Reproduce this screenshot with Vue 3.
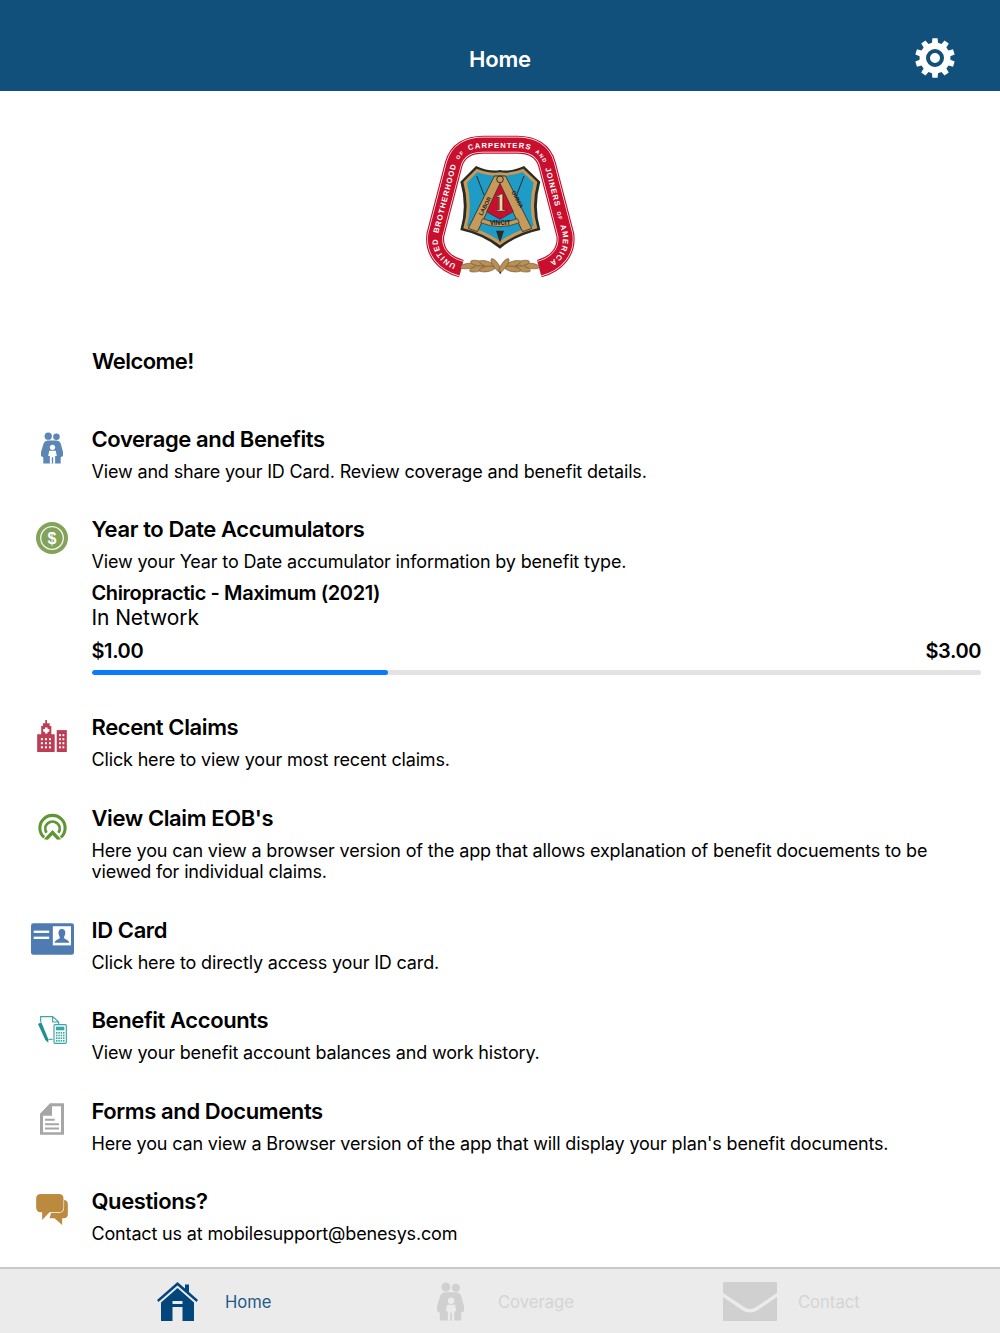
<script setup>
const rows = [
  { icon: 'family', title: 'Coverage and Benefits', text: 'View and share your ID Card. Review coverage and benefit details.' },
  { icon: 'dollar', title: 'Year to Date Accumulators', text: 'View your Year to Date accumulator information by benefit type.', accum: true },
  { icon: 'hospital', title: 'Recent Claims', text: 'Click here to view your most recent claims.' },
  { icon: 'eob', title: "View Claim EOB's", text: 'Here you can view a browser version of the app that allows explanation of benefit docuements to be viewed for individual claims.' },
  { icon: 'card', title: 'ID Card', text: 'Click here to directly access your ID card.' },
  { icon: 'accounts', title: 'Benefit Accounts', text: 'View your benefit account balances and work history.' },
  { icon: 'forms', title: 'Forms and Documents', text: "Here you can view a Browser version of the app that will display your plan's benefit documents." },
  { icon: 'chat', title: 'Questions?', text: 'Contact us at mobilesupport@benesys.com' }
]

function gearPath() {
  const n = 10, R = 20, r = 15.5
  let d = ''
  for (let i = 0; i < n; i++) {
    const a = (i / n) * Math.PI * 2 - Math.PI / 2
    const w = (Math.PI / n)
    const pts = [
      [r, a - w * 0.62], [R, a - w * 0.42], [R, a + w * 0.42], [r, a + w * 0.62]
    ]
    pts.forEach(([rad, ang], j) => {
      const x = (22 + rad * Math.cos(ang)).toFixed(2)
      const y = (22 + rad * Math.sin(ang)).toFixed(2)
      d += (i === 0 && j === 0 ? 'M' : 'L') + x + ' ' + y + ' '
    })
  }
  return d + 'Z'
}
const gear = gearPath()

const leaves = [
  [205, 438, -8], [235, 430, 12], [232, 447, -12], [262, 432, 18], [262, 447, -10], [288, 436, 55],
  [395, 438, 8], [365, 430, -12], [368, 447, 12], [338, 432, -18], [338, 447, 10], [312, 436, -55]
]
const ringMid = 'M184 446 C132 432 100 395 106 345 L161 133 C172 92 205 74 250 74 L352 74 C397 74 430 92 441 133 L496 345 C502 395 470 432 418 446'
const adultPath = 'M0 60 L8 34 Q10 27 20 25 L48 25 Q58 27 60 34 L67 60 L67 72 L60 76 L60 95 L7 95 L7 76 L0 72 Z'
const childPath = 'M25 56 H45 L48 72 H43 V96 H37 V76 H33 V96 H27 V72 H22 Z'
</script>

<template>
  <div class="page">
    <header class="top">
      <h1 class="top-title">Home</h1>
      <svg class="gear" viewBox="0 0 44 44" aria-hidden="true">
        <path :d="gear" fill="#fff" />
        <circle cx="22" cy="22" r="7" fill="#fff" stroke="#11507b" stroke-width="4" />
      </svg>
    </header>

    <main class="content">
      <div class="logo-wrap">
        <svg class="logo" viewBox="0 0 600 510" aria-label="United Brotherhood of Carpenters and Joiners of America">
          <defs>
            <path id="ringText" d="M176 436 C134 422 108 392 114 345 L169 135 C180 100 210 84 250 84 L352 84 C392 84 422 100 433 135 L488 345 C494 392 468 422 426 436" />
          </defs>
          <path :d="ringMid" fill="none" stroke="#c8102e" stroke-width="54" />
          <path :d="ringMid" fill="none" stroke="#fff" stroke-width="47" />
          <path :d="ringMid" fill="none" stroke="#c8102e" stroke-width="43" />
          <text class="ring-text" fill="#fff">
            <textPath href="#ringText" startOffset="8">UNITED BROTHERHOOD <tspan class="small">OF</tspan> CARPENTERS <tspan class="small">AND</tspan> JOINERS <tspan class="small">OF</tspan> AMERICA</textPath>
          </text>
          <path d="M228 138 Q268 156 300 150 Q332 156 372 138 L421 185 Q400 260 421 330 Q350 345 300 386 Q250 345 181 330 Q202 260 181 185 Z" fill="#2b2b24" />
          <path d="M230 146 Q268 162 300 157 Q332 162 370 146 L412 186 Q392 260 412 325 Q348 340 300 376 Q252 340 190 325 Q210 260 190 186 Z" fill="#c69a5a" />
          <path d="M232 156 Q268 170 300 165 Q332 170 368 156 L401 188 Q384 260 401 318 Q345 332 300 364 Q255 332 201 318 Q218 260 201 188 Z" fill="#1f9cc5" />
          <path d="M230 168 L252 225 M372 168 L350 225" stroke="#2b2b24" stroke-width="3" />
          <path d="M283 168 L317 168 L395 325 L368 335 L300 198 L232 335 L205 325 Z" fill="#c69a5a" stroke="#2b2b24" stroke-width="2.5" />
          <path d="M300 190 L340 275 L300 298 L260 275 Z" fill="#c8102e" stroke="#2b2b24" stroke-width="2" />
          <circle cx="300" cy="178" r="10" fill="#c69a5a" stroke="#2b2b24" stroke-width="3" />
          <path d="M248 296 Q300 318 352 296 L358 308 Q300 332 242 308 Z" fill="#c69a5a" stroke="#2b2b24" stroke-width="2" />
          <path d="M288 332 L312 332 L300 368 Z" fill="#2b2b24" />
          <text x="302" y="272" class="one">1</text>
          <text x="300" y="314" class="vincit">VINCIT</text>
          <text class="motto" transform="translate(246 288) rotate(-62)">LABOR</text>
          <text class="motto" transform="translate(334 216) rotate(62)">OMNIA</text>
          <g fill="#b98f56" stroke="#5d4a2a" stroke-width="1.5">
            <ellipse v-for="(l, i) in leaves" :key="i" :cx="l[0]" :cy="l[1]" rx="24" ry="8" :transform="`rotate(${l[2]} ${l[0]} ${l[1]})`" />
          </g>
          <circle cx="301" cy="458" r="3" fill="#222" />
        </svg>
      </div>

      <p class="welcome">Welcome!</p>

      <ul class="list">
        <li v-for="row in rows" :key="row.title" class="row">
          <div class="icon-cell">
            <svg v-if="row.icon === 'family'" class="i-family" viewBox="0 0 67 96">
              <g fill="#5b86b5">
                <circle cx="22" cy="12" r="11" />
                <circle cx="47" cy="14" r="10" />
                <path :d="adultPath" />
              </g>
              <g fill="#fff">
                <circle cx="35" cy="46" r="8" />
                <path :d="childPath" />
              </g>
            </svg>
            <svg v-else-if="row.icon === 'dollar'" class="i-dollar" viewBox="0 0 32 32">
              <circle cx="16" cy="16" r="16" fill="#83a35a" />
              <circle cx="16" cy="16" r="11.3" fill="none" stroke="#f3f6ec" stroke-width="1.3" />
              <text x="16" y="21.5" class="dollar">$</text>
            </svg>
            <svg v-else-if="row.icon === 'hospital'" class="i-hospital" viewBox="0 0 88 95">
              <g fill="#bd3d54">
                <path d="M24 0 H29 V10 H37 V18 H42 V42 H52 V95 H0 V42 H12 V18 H17 V10 H24 Z" />
                <path d="M58 30 H88 V95 H58 Z" />
              </g>
              <path d="M23 22 H31 V27 H36 V35 H31 V40 H23 V35 H18 V27 H23 Z" fill="#fff" />
              <g fill="#fff">
                <template v-for="y in [54, 66, 78]" :key="y">
                  <rect v-for="x in [11, 23, 35]" :key="x" :x="x" :y="y" width="6" height="6" />
                </template>
                <template v-for="y in [42, 54, 66, 78]" :key="y">
                  <rect v-for="x in [65, 75]" :key="x" :x="x" :y="y" width="5.5" height="6" />
                </template>
              </g>
            </svg>
            <svg v-else-if="row.icon === 'eob'" class="i-eob" viewBox="0 0 85 81">
              <g fill="none" stroke="#5d9632">
                <path d="M18 74 A37 37 0 1 1 67 74" stroke-width="9" />
                <path d="M25 60 A21 21 0 1 1 60 60" stroke-width="8" />
              </g>
              <path d="M42.5 52 L68 79 L56 81 L42.5 67 L29 81 L17 79 Z" fill="#5d9632" />
            </svg>
            <svg v-else-if="row.icon === 'card'" class="i-card" viewBox="0 0 128 94">
              <rect width="128" height="94" rx="7" fill="#4f7bb3" />
              <rect x="8" y="22" width="46" height="7" fill="#fff" />
              <rect x="8" y="40" width="46" height="7" fill="#fff" />
              <rect x="65" y="9" width="54" height="57" fill="#fff" />
              <path d="M92 17 C100 17 103 24 102 31 C101 37 98 40 98 43 C99 47 113 49 114 58 L70 58 C71 49 85 47 86 43 C86 40 83 37 82 31 C81 24 84 17 92 17 Z" fill="#4f7bb3" />
            </svg>
            <svg v-else-if="row.icon === 'accounts'" class="i-accounts" viewBox="0 0 87 84">
              <g fill="none" stroke="#3ba6a6" stroke-width="3.5">
                <path d="M8 18 V2 H44 L62 18 V25 M44 2 V18 H62" />
                <path d="M32 70 H44" />
                <rect x="48" y="26" width="37" height="56" rx="3" />
              </g>
              <rect x="54" y="32" width="25" height="11" fill="#3ba6a6" />
              <g fill="#3ba6a6">
                <template v-for="y in [48, 56, 64, 72]" :key="y">
                  <rect v-for="x in [54, 61, 68, 75]" :key="x" :x="x" :y="y" width="4.5" height="5" />
                </template>
              </g>
              <path d="M0 24 L10 19 L31 70 L31 80 L22 72 Z" fill="#1f8f92" />
            </svg>
            <svg v-else-if="row.icon === 'forms'" class="i-forms" viewBox="0 0 72 95">
              <path fill-rule="evenodd" d="M30 0 H72 V95 H0 V32 Z M36 9 V38 H9 V87 H63 V9 Z" fill="#a6a6a6" />
              <path d="M15 47 H44 V53 H15 Z M15 60 H57 V66 H15 Z M15 73 H57 V79 H15 Z" fill="#a6a6a6" />
            </svg>
            <svg v-else-if="row.icon === 'chat'" class="i-chat" viewBox="0 0 95 93">
              <path d="M60 18 H83 Q95 18 95 32 V60 Q95 73 82 73 H78 V93 L55 73 H40 L50 40 Z" fill="#bb8a3f" />
              <path d="M14 0 H68 Q82 0 82 14 V40 Q82 55 68 55 H40 L18 78 V55 H14 Q0 55 0 40 V14 Q0 0 14 0 Z" fill="#bb8a3f" stroke="#fff" stroke-width="3.5" paint-order="stroke" />
            </svg>
          </div>
          <div class="body">
            <h2 class="title">{{ row.title }}</h2>
            <p class="text">{{ row.text }}</p>
            <div v-if="row.accum" class="accum">
              <div class="accum-name">Chiropractic - Maximum (2021)</div>
              <div class="accum-net">In Network</div>
              <div class="accum-vals"><span>$1.00</span><span>$3.00</span></div>
              <div class="bar"><div class="bar-fill" :style="{ width: '33.3%' }"></div></div>
            </div>
          </div>
        </li>
      </ul>
    </main>

    <nav class="tabs">
      <div class="tab on">
        <div class="tab-icon">
          <svg class="t-home" viewBox="0 0 41 39">
            <path d="M20.5 0 L28 6.5 V2.5 H32 V10 L41 18 L39.5 20 L20.5 3.5 L1.5 20 L0 18 Z" fill="#03467c" />
            <path fill-rule="evenodd" d="M20.5 6 L37 20.5 V39 H25.5 V25 H15.5 V39 H4 V20.5 Z M15.5 19 V22 H25.5 V19 Z" fill="#03467c" />
          </svg>
        </div>
        <span>Home</span>
      </div>
      <div class="tab">
        <div class="tab-icon">
          <svg class="t-family" viewBox="0 0 67 96">
            <g fill="#d0d0d0">
              <circle cx="22" cy="12" r="11" />
              <circle cx="47" cy="14" r="10" />
              <path :d="adultPath" />
            </g>
            <g fill="#ebebeb">
              <circle cx="35" cy="46" r="8" />
              <path :d="childPath" />
            </g>
          </svg>
        </div>
        <span>Coverage</span>
      </div>
      <div class="tab">
        <div class="tab-icon">
          <svg class="t-mail" viewBox="0 0 54 39">
            <path d="M0 0 H54 V11 L33 25 Q27 29 21 25 L0 11 Z" fill="#d0d0d0" />
            <path d="M0 15 L19 28 Q27 33 35 28 L54 15 V39 H0 Z" fill="#d0d0d0" />
          </svg>
        </div>
        <span>Contact</span>
      </div>
    </nav>
  </div>
</template>

<style>
html, body { margin: 0; background: #fff; }
</style>

<style scoped>
* { box-sizing: border-box; }
.page {
  width: 1000px; height: 1333px; display: flex; flex-direction: column; overflow: hidden;
  font-family: Inter, "Liberation Sans", sans-serif; color: #000; background: #fff;
}
.top {
  height: 91px; background: #11507b; display: flex; align-items: center; justify-content: center;
  position: relative; flex: none; padding-top: 26px;
}
.top-title { margin: 0; color: #fff; font-size: 22px; font-weight: 600; letter-spacing: -0.2px; line-height: 26px; }
.gear { position: absolute; left: 913px; top: 36px; width: 44px; height: 44px; }
.content { flex: 1; min-height: 0; }
.logo-wrap { display: flex; justify-content: center; padding-top: 29px; }
.logo { width: 200px; height: 170px; display: block; }
.ring-text { font: 700 23px "Liberation Sans", sans-serif; letter-spacing: 2.9px; word-spacing: 5px; }
.small { font-size: 16px; }
.one { font: 700 76px "Liberation Serif", serif; fill: #f2d9a0; text-anchor: middle; stroke: #2b2b24; stroke-width: 2; }
.vincit { font: 700 19px "Liberation Sans", sans-serif; fill: #222; text-anchor: middle; }
.motto { font: 700 17px "Liberation Sans", sans-serif; fill: #222; }
.dollar { font: 700 16px "Liberation Sans", sans-serif; fill: #fff; text-anchor: middle; }
.welcome { margin: 58px 0 0 92px; font-size: 22px; line-height: 26px; font-weight: 600; letter-spacing: -0.55px; }
.list { list-style: none; margin: 51.6px 0 0; padding: 0; }
.row { display: flex; padding-bottom: 34px; }
.icon-cell { width: 91.5px; flex: none; display: flex; justify-content: center; padding-left: 20px; padding-right: 7.5px; align-items: flex-start; }
.body { flex: 1; padding-right: 19px; min-width: 0; }
.title { margin: 0; font-size: 22px; line-height: 26px; font-weight: 600; letter-spacing: -0.4px; }
.text { margin: 9px 0 0; font-size: 18px; line-height: 21.5px; letter-spacing: -0.16px; }
.accum-name { margin-top: 8px; font-size: 20px; line-height: 24px; font-weight: 600; letter-spacing: -0.4px; }
.accum-net { font-size: 21px; line-height: 25px; letter-spacing: -0.1px; }
.accum-vals { display: flex; justify-content: space-between; margin-top: 9px; font-size: 20px; line-height: 24px; font-weight: 600; letter-spacing: -0.4px; }
.bar { height: 5px; border-radius: 3px; background: #e3e3e3; margin-top: 7px; overflow: hidden; margin-bottom: 5.5px; }
.bar-fill { height: 100%; background: #0a7aff; border-radius: 3px; }
.i-family { width: 22px; height: 32px; margin-top: 6px; }
.i-dollar { width: 32px; height: 32px; margin-top: 5.5px; }
.i-hospital { width: 30px; height: 32px; margin-top: 6px; }
.i-eob { width: 29px; height: 28px; margin-top: 7.5px; }
.i-card { width: 43px; height: 32px; margin-top: 6px; }
.i-accounts { width: 29px; height: 28px; margin-top: 9px; }
.i-forms { width: 24px; height: 32px; margin-top: 5.5px; }
.i-chat { width: 32px; height: 31px; margin-top: 6px; }
.tabs {
  height: 66px; flex: none; background: #ebebeb; border-top: 2px solid #c9c9c9;
  display: grid; grid-template-columns: 273px 300px 1fr; padding-left: 150px; align-items: center;
  font-size: 16.6px; color: #d4d4d4;
}
.tab { display: flex; align-items: center; gap: 21px; }
.tab span { padding-top: 2px; }
.tab.on { color: #1f5a86; }
.tab-icon { width: 54px; display: flex; justify-content: center; }
.t-home { width: 41px; height: 39px; display: block; }
.t-family { width: 27px; height: 39px; display: block; }
.t-mail { width: 54px; height: 39px; display: block; }
</style>
